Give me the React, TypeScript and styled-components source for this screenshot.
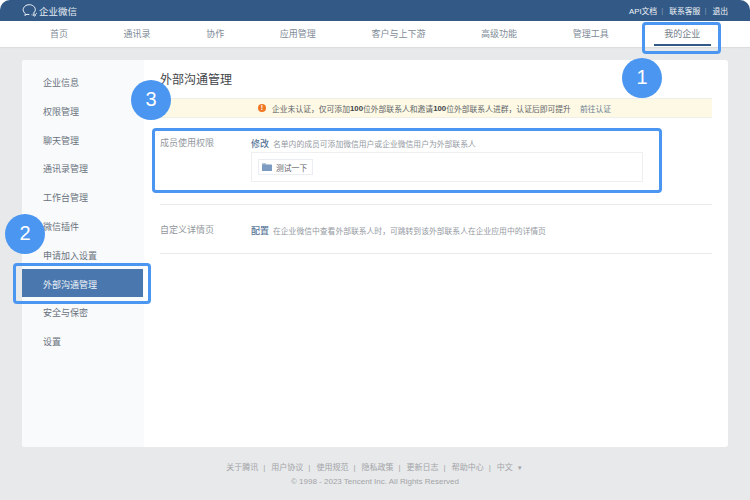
import React from 'react';
import styled, { createGlobalStyle } from 'styled-components';

const GlobalStyle = createGlobalStyle`
  html, body {
    margin: 0;
    padding: 0;
    background: #fff;
  }
  body {
    font-family: "Liberation Sans", "Noto Sans CJK SC", sans-serif;
  }
`;

const Page = styled.div`
  position: relative;
  width: 750px;
  height: 500px;
  overflow: hidden;
  background: #e8e9eb;
  border-radius: 10px 10px 0 0;
  display: flex;
  flex-direction: column;
`;

const TopBar = styled.header`
  height: 21px;
  flex: none;
  background: #335a87;
  display: flex;
  align-items: center;
  justify-content: space-between;
  padding: 0 22px;
  color: #fff;
`;

const Brand = styled.div`
  display: flex;
  align-items: center;
  gap: 1px;
  font-size: 9.5px;
  color: #e6ebf1;
`;

const TopLinks = styled.div`
  display: flex;
  align-items: center;
  font-size: 7.8px;
  color: #f2f4f7;
`;

const TopSep = styled.span`
  margin: 0 6px 0 4px;
  color: #7f98b5;
`;

const Nav = styled.nav`
  height: 26px;
  flex: none;
  background: #fff;
  display: flex;
  align-items: center;
  gap: 55.6px;
  padding-left: 50px;
  box-shadow: 0 1px 1px rgba(0, 0, 0, 0.05);
`;

const NavItem = styled.a<{ $active?: boolean }>`
  position: relative;
  font-size: 9px;
  line-height: 26px;
  color: #808b97;

  ${({ $active }) => $active && `
    color: #737d89;
    &::after {
      content: '';
      position: absolute;
      left: -10px;
      right: -11px;
      bottom: 1px;
      height: 2px;
      background: #335a87;
    }
  `}
`;

const Card = styled.main`
  flex: none;
  height: 387px;
  margin: 13px 22px 0;
  background: #fff;
  border-radius: 3px;
  display: flex;
  overflow: hidden;
`;

const Sidebar = styled.aside`
  width: 122px;
  flex: none;
  background: #f9fafc;
  padding-top: 7px;
  display: flex;
  flex-direction: column;
`;

const SideItem = styled.a<{ $active?: boolean }>`
  height: 28.8px;
  box-sizing: border-box;
  padding: 4px 0 0 21px;
  margin-right: 1px;
  line-height: 24.8px;
  font-size: 9px;
  color: ${({ $active }) => ($active ? '#eef3f8' : '#69727c')};
  background: ${({ $active }) => ($active ? '#4a78ae' : 'transparent')};
`;

const Content = styled.section`
  flex: 1;
  padding-right: 16px;
`;

const Title = styled.h1`
  margin: 0;
  padding: 13px 0 0 16px;
  height: 38px;
  box-sizing: border-box;
  font-size: 12px;
  line-height: 15px;
  font-weight: 400;
  color: #3f444a;
`;

const Notice = styled.div`
  height: 20px;
  background: #fdf9e4;
  border-top: 1px solid #eeeeea;
  border-bottom: 1px solid #f0efe8;
  box-sizing: border-box;
  display: flex;
  align-items: center;
  padding-left: 114px;
  font-size: 7.8px;
  color: #5f646a;
  white-space: nowrap;

  b {
    font-weight: 700;
    color: #3f4349;
  }
`;

const NoticeIcon = styled.span`
  width: 8px;
  height: 8px;
  border-radius: 50%;
  background: #f0761f;
  color: #fff;
  font-size: 7px;
  line-height: 8px;
  font-weight: 700;
  text-align: center;
  margin-right: 6px;
`;

const NoticeLink = styled.a`
  margin-left: 9px;
  color: #6c7f96;
`;

const Row = styled.div<{ $height: number }>`
  margin-left: 16px;
  height: ${({ $height }) => $height}px;
  box-sizing: border-box;
  padding-top: 19px;
  border-bottom: 1px solid #e9eaec;
  display: flex;
`;

const RowLabel = styled.div`
  width: 91px;
  flex: none;
  font-size: 9px;
  line-height: 12px;
  color: #92979d;
`;

const RowBody = styled.div`
  flex: 1;
`;

const RowLine = styled.div`
  display: flex;
  align-items: center;
  height: 12px;
  white-space: nowrap;
`;

const ActionLink = styled.a`
  font-size: 9px;
  font-weight: 500;
  color: #557396;
  margin-right: 4px;
`;

const Hint = styled.span`
  font-size: 7.8px;
  color: #94999f;
`;

const MemberBox = styled.div`
  width: 392px;
  height: 30px;
  margin-top: 3px;
  box-sizing: border-box;
  border: 1px solid #efeff1;
  padding: 6px;
  display: flex;
`;

const MemberTag = styled.div`
  width: 55px;
  height: 16px;
  box-sizing: border-box;
  border: 1px solid #eaedf1;
  display: flex;
  align-items: center;
  padding-left: 3px;
  gap: 4px;
  font-size: 7.8px;
  color: #5f646a;
`;

const Footer = styled.footer`
  margin-top: 14px;
  text-align: center;
  font-size: 8px;
  line-height: 14px;
  color: #a2a4a7;
`;

const FooterLinks = styled.div`
  display: flex;
  justify-content: center;
  align-items: center;
  padding-right: 1px;
`;

const FooterSep = styled.span`
  margin: 0 6px 0 5px;
`;

const LangArrow = styled.span`
  margin-left: 4px;
  font-size: 6px;
`;

const Highlight = styled.div<{ $x: number; $y: number; $w: number; $h: number }>`
  position: absolute;
  left: ${({ $x }) => $x}px;
  top: ${({ $y }) => $y}px;
  width: ${({ $w }) => $w}px;
  height: ${({ $h }) => $h}px;
  box-sizing: border-box;
  border: 3px solid #4a96f0;
  border-radius: 4px;
`;

const Badge = styled.div<{ $x: number; $y: number }>`
  position: absolute;
  left: ${({ $x }) => $x - 20}px;
  top: ${({ $y }) => $y - 20}px;
  width: 40px;
  height: 40px;
  border-radius: 50%;
  background: #4a96f0;
  color: #fff;
  font-family: "Liberation Sans", sans-serif;
  font-size: 20px;
  line-height: 38px;
  text-align: center;
`;

const Logo = () => (
  <svg width="16" height="13" viewBox="0 0 16 13" fill="none" stroke="#f2f5f8" strokeWidth="1">
    <path d="M10.800 9.700c1.500-.9 2.500-2.400 2.500-4C13.300 2.900 10.600.700 7.300.700S1.200 2.900 1.200 5.700c0 1.500.8 2.900 2.100 3.900l-.4 1.800 2.100-1.100c.8.200 1.500.3 2.300.3" />
    <circle cx="12.500" cy="11" r="1" />
    <path d="M9.600 10.800l.9.300M14.200 9.700l.8-.8" />
  </svg>
);

const Folder = () => (
  <svg width="10" height="8" viewBox="0 0 10 8">
    <path d="M0 1a.6.6 0 0 1 .6-.6h3l1 1H0z" fill="#5f83ad" />
    <rect x="0" y="1.600" width="10" height="6.400" rx=".5" fill="#7d9bc0" />
  </svg>
);

const navItems = ['首页', '通讯录', '协作', '应用管理', '客户与上下游', '高级功能', '管理工具', '我的企业'];
const sideItems = ['企业信息', '权限管理', '聊天管理', '通讯录管理', '工作台管理', '微信插件', '申请加入设置', '外部沟通管理', '安全与保密', '设置'];
const footerLinks = ['关于腾讯', '用户协议', '使用规范', '隐私政策', '更新日志', '帮助中心'];

const App: React.FC = () => (
  <Page>
    <GlobalStyle />
    <TopBar>
      <Brand>
        <Logo />
        企业微信
      </Brand>
      <TopLinks>
        API文档<TopSep>|</TopSep>联系客服<TopSep>|</TopSep>退出
      </TopLinks>
    </TopBar>
    <Nav>
      {navItems.map(item => (
        <NavItem key={item} $active={item === '我的企业'}>{item}</NavItem>
      ))}
    </Nav>
    <Card>
      <Sidebar>
        {sideItems.map(item => (
          <SideItem key={item} $active={item === '外部沟通管理'}>{item}</SideItem>
        ))}
      </Sidebar>
      <Content>
        <Title>外部沟通管理</Title>
        <Notice>
          <NoticeIcon>!</NoticeIcon>
          企业未认证，仅可添加<b>100</b>位外部联系人和邀请<b>100</b>位外部联系人进群，认证后即可提升
          <NoticeLink>前往认证</NoticeLink>
        </Notice>
        <Row $height={87}>
          <RowLabel>成员使用权限</RowLabel>
          <RowBody>
            <RowLine>
              <ActionLink>修改</ActionLink>
              <Hint>名单内的成员可添加微信用户或企业微信用户为外部联系人</Hint>
            </RowLine>
            <MemberBox>
              <MemberTag>
                <Folder />
                测试一下
              </MemberTag>
            </MemberBox>
          </RowBody>
        </Row>
        <Row $height={49}>
          <RowLabel>自定义详情页</RowLabel>
          <RowBody>
            <RowLine>
              <ActionLink>配置</ActionLink>
              <Hint>在企业微信中查看外部联系人时，可跳转到该外部联系人在企业应用中的详情页</Hint>
            </RowLine>
          </RowBody>
        </Row>
      </Content>
    </Card>
    <Footer>
      <FooterLinks>
        {footerLinks.map(link => (
          <React.Fragment key={link}>
            {link}<FooterSep>|</FooterSep>
          </React.Fragment>
        ))}
        中文<LangArrow>▼</LangArrow>
      </FooterLinks>
      <div>© 1998 - 2023 Tencent Inc. All Rights Reserved</div>
    </Footer>
    <Highlight $x={642} $y={22} $w={79} $h={32} />
    <Highlight $x={13} $y={263} $w={138} $h={41} />
    <Highlight $x={152} $y={128} $w={510} $h={65} />
    <Badge $x={642} $y={78}>1</Badge>
    <Badge $x={25} $y={234}>2</Badge>
    <Badge $x={151} $y={100}>3</Badge>
  </Page>
);

export default App;
